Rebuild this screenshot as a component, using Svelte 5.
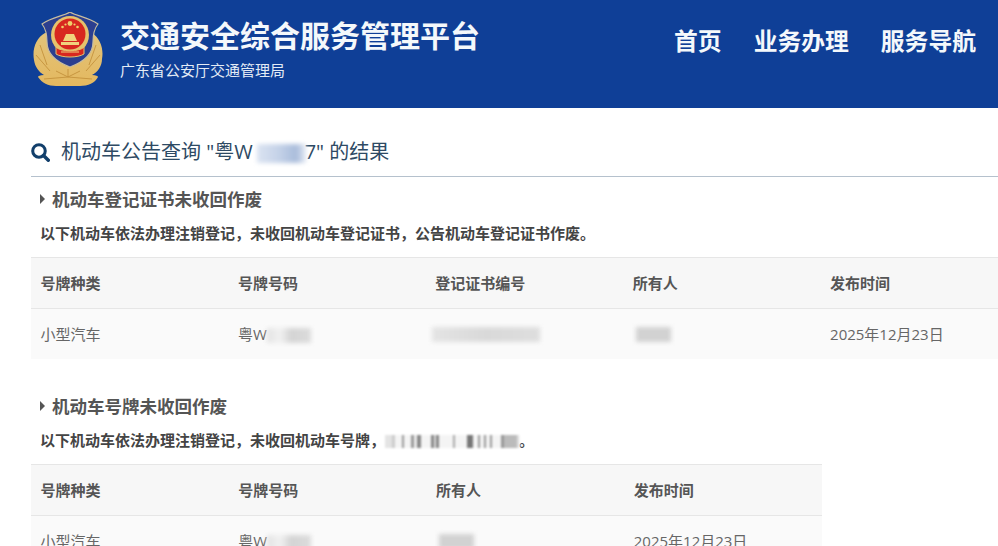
<script>
    const nav = ["首页", "业务办理", "服务导航"];
</script>

<header class="top">
    <div class="brand">
        <svg class="emblem" viewBox="13 7 70 75" aria-hidden="true">
            <defs>
                <linearGradient id="gold" x1="0" y1="0" x2="0" y2="1">
                    <stop offset="0" stop-color="#e3c47a" />
                    <stop offset="1" stop-color="#e4b85f" />
                </linearGradient>
            </defs>
            <!-- wheat -->
            <path d="M25 28 C16 33 12 44 14 55 C15 62 19 67 24 70 C20 70 18 71 18 72 C22 78 28 81 36 81 L60 81 C68 81 75 78 78 72 C78 71 76 70 72 70 C78 67 82 61 82 54 C84 44 80 33 72 28 Z" fill="url(#gold)" />
            <path d="M20 40 L27 60 M16 50 L30 66 M76 40 L69 60 M80 50 L66 66 M24 74 L48 72 L72 74 M36 66 L48 72 L60 66 M48 64 V72" stroke="#c4923c" stroke-width="0.9" fill="none" />
            <!-- shield -->
            <path d="M50 7 C56 11 68 12 78 19 C74 24 73 30 73 37 C73 48 66 56 50 62 C34 56 27 48 27 37 C27 30 26 24 22 19 C32 12 44 11 50 7 Z" fill="#2c3f8f" stroke="#c8bda0" stroke-width="1.2" />
            <!-- national emblem -->
            <circle cx="50" cy="30" r="19" fill="#e7c26c" />
            <circle cx="50" cy="29" r="15.5" fill="#d8271f" />
            <circle cx="50" cy="18.5" r="2.4" fill="#f0cf6a" />
            <circle cx="42.5" cy="22" r="1.3" fill="#f0cf6a" />
            <circle cx="57.5" cy="22" r="1.3" fill="#f0cf6a" />
            <circle cx="45.5" cy="19.5" r="1.1" fill="#f0cf6a" />
            <circle cx="54.5" cy="19.5" r="1.1" fill="#f0cf6a" />
            <path d="M43 36 L46 29 L54 29 L57 36 Z M41 37 H59 V40 H41 Z" fill="#f0d27c" />
            <path d="M36 42 C40 47 60 47 64 42 L64 49 C58 53 42 53 36 49 Z" fill="#d8271f" stroke="#e7c26c" stroke-width="1" />
            <path d="M41 47 H59" stroke="#f0d27c" stroke-width="1" />
        </svg>
        <div class="names">
            <h1>交通安全综合服务管理平台</h1>
            <p>广东省公安厅交通管理局</p>
        </div>
    </div>
    <nav>
        {#each nav as item}
            <a href="#top">{item}</a>
        {/each}
    </nav>
</header>

<main>
    <h2 class="query">
        <svg class="search" viewBox="0 0 20 20" aria-hidden="true">
            <circle cx="8.4" cy="8.4" r="6.6" fill="none" stroke="#123f6b" stroke-width="3.2" />
            <path d="M13.2 13.2 L18.2 18.2" stroke="#123f6b" stroke-width="3.6" stroke-linecap="round" />
        </svg>
        <span>机动车公告查询 "粤W<i class="mask plate"></i>7" 的结果</span>
    </h2>

    <section>
        <h3><b class="arrow"></b>机动车登记证书未收回作废</h3>
        <p class="note">以下机动车依法办理注销登记，未收回机动车登记证书，公告机动车登记证书作废。</p>
        <div class="table five">
            <div class="row head">
                <span>号牌种类</span><span>号牌号码</span><span>登记证书编号</span><span>所有人</span><span>发布时间</span>
            </div>
            <div class="row">
                <span>小型汽车</span>
                <span>粤W<i class="mask short"></i></span>
                <span><i class="mask cert"></i></span>
                <span><i class="mask owner"></i></span>
                <span>2025年12月23日</span>
            </div>
        </div>
    </section>

    <section class="second">
        <h3><b class="arrow"></b>机动车号牌未收回作废</h3>
        <p class="note">以下机动车依法办理注销登记，未收回机动车号牌，<i class="mask stripes"></i>。</p>
        <div class="table four">
            <div class="row head">
                <span>号牌种类</span><span>号牌号码</span><span>所有人</span><span>发布时间</span>
            </div>
            <div class="row">
                <span>小型汽车</span>
                <span>粤W<i class="mask short"></i></span>
                <span><i class="mask owner"></i></span>
                <span>2025年12月23日</span>
            </div>
        </div>
    </section>
</main>

<style>
    :global(body) {
        margin: 0;
        background: #fff;
        overflow: hidden;
        font-family: "Open Sans", "Noto Sans CJK SC", sans-serif;
    }

    .top {
        height: 108px;
        box-sizing: border-box;
        padding: 12px 22px 0 33px;
        background: #0f3f97;
        color: #fff;
        display: flex;
        justify-content: space-between;
    }

    .brand {
        display: flex;
        gap: 17px;
    }

    .emblem {
        width: 70px;
        height: 75px;
        filter: blur(0.5px);
    }

    .names h1 {
        margin: 3px 0 0;
        font-size: 30px;
        line-height: 42px;
        font-weight: 700;
        color: #f4f8fb;
    }

    .names p {
        margin: 3px 0 0;
        font-size: 15px;
        line-height: 20px;
        color: #e3ebf5;
    }

    nav {
        display: flex;
        gap: 32px;
        padding-top: 11px;
    }

    nav a {
        color: #f4f8fb;
        font-size: 23.8px;
        line-height: 36px;
        font-weight: 700;
        text-decoration: none;
    }

    main {
        padding: 19px 0 0 31px;
        width: 1100px;
    }

    .query {
        margin: 0;
        height: 49px;
        display: flex;
        align-items: flex-start;
        gap: 11px;
        border-bottom: 1px solid #b5c1cd;
        font-size: 20px;
        line-height: 50px;
        font-weight: 400;
        color: #2e4a64;
    }

    .search {
        width: 19px;
        height: 19px;
        margin-top: 16px;
        flex: none;
    }

    section {
        padding-top: 8px;
    }

    section.second {
        padding-top: 33px;
    }

    h3 {
        margin: 0 0 0 9px;
        display: flex;
        align-items: center;
        gap: 7px;
        font-size: 17.5px;
        line-height: 28px;
        font-weight: 700;
        color: #555;
    }

    .arrow {
        width: 0;
        height: 0;
        border-left: 5px solid #555;
        border-top: 5px solid transparent;
        border-bottom: 5px solid transparent;
    }

    .note {
        margin: 9px 0 0 9px;
        font-size: 15px;
        line-height: 22px;
        font-weight: 700;
        color: #444;
    }

    .table {
        margin-top: 13px;
        background: #fafafa;
    }

    .table.five {
        width: 987px;
    }

    .table.four {
        width: 791px;
    }

    .row {
        display: grid;
        height: 51px;
        box-sizing: border-box;
        padding-bottom: 2px;
        align-items: center;
        border-top: 1px solid #e6e6e6;
        font-size: 15px;
        color: #666;
    }

    .five .row {
        grid-template-columns: repeat(5, 197.4px);
    }

    .four .row {
        grid-template-columns: repeat(4, 197.75px);
    }

    .row span {
        padding-left: 9.5px;
        white-space: nowrap;
    }

    .row.head {
        background: #f7f7f7;
        font-weight: 700;
        color: #555;
    }

    .mask {
        display: inline-block;
        vertical-align: middle;
        filter: blur(2px);
    }

    .plate {
        width: 49px;
        height: 19px;
        margin: 0 -1px 0 4px;
        background: linear-gradient(90deg, #dbe3f1, #c4d2e8 45%, #a9bcdb 80%, #e7ecf5);
    }

    .short {
        width: 44px;
        height: 15px;
        background: linear-gradient(90deg, #e3e3e3, #f1f1f1 30%, #d4d4d4 55%, #dcdcdc);
    }

    .cert {
        width: 108px;
        height: 15px;
        margin-left: -3px;
        background: linear-gradient(90deg, #e4e4e4, #d9d9d9 50%, #dedede);
    }

    .owner {
        width: 35px;
        height: 15px;
        margin-left: 3px;
        background: #d2d2d2;
    }

    .stripes {
        width: 135px;
        height: 13px;
        margin-right: -1px;
        filter: blur(0.8px);
        background: linear-gradient(90deg,
            #e4e4e4 0 6px, #ccc 8px 10px, #f4f4f4 10px 17px, #999 17px 19px, #f4f4f4 19px 26px, #999 26px 29px, #eee 29px 32px, #888 32px 36px,
            #f4f4f4 36px 46px, #888 46px 49px, #ddd 49px 51px, #888 51px 54px, #f4f4f4 54px 68px, #aaa 68px 70px, #f4f4f4 70px 82px, #777 82px 88px,
            #f4f4f4 88px 93px, #999 93px 95px, #f4f4f4 95px 99px, #999 99px 101px, #f4f4f4 101px 105px, #999 105px 107px, #f4f4f4 107px 116px, #999 116px 119px, #bbb 119px 131px, #fff 135px);
    }
</style>
